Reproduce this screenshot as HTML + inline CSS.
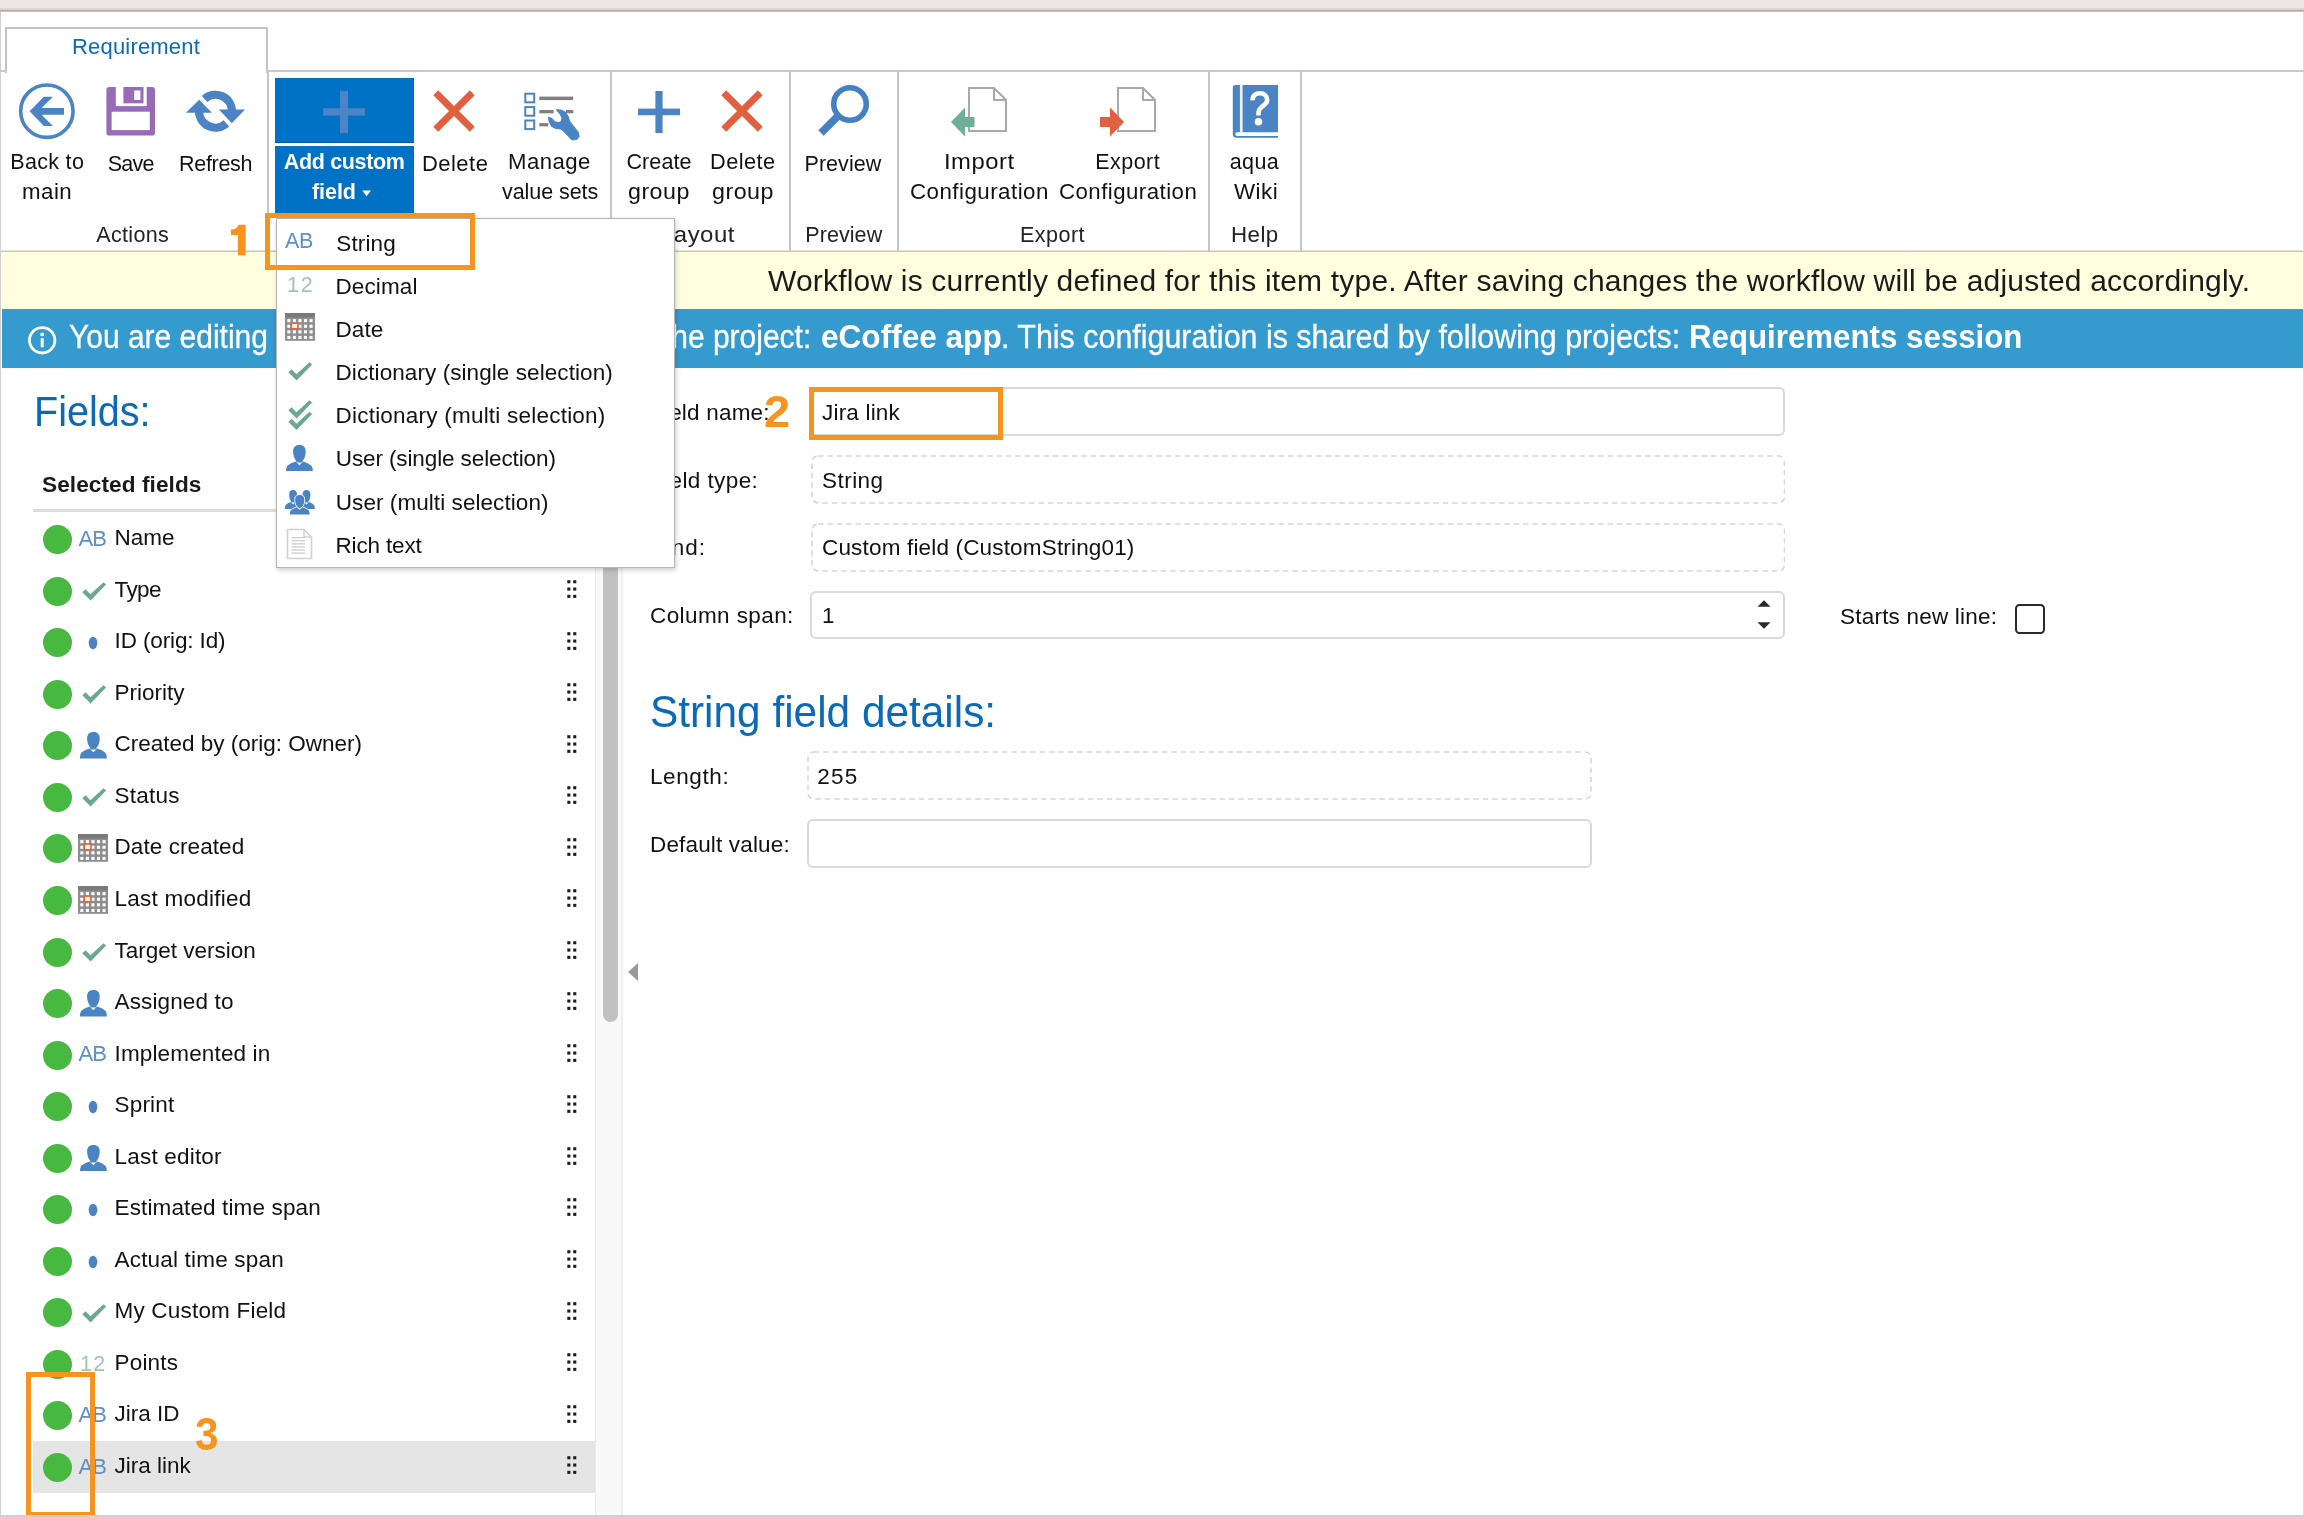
<!DOCTYPE html>
<html>
<head>
<meta charset="utf-8">
<title>Requirement</title>
<style>
*{box-sizing:border-box;margin:0;padding:0}
html,body{width:2304px;height:1517px;overflow:hidden;background:#fff}
body{position:relative;font-family:"Liberation Sans",sans-serif;color:#111;}
#wrap{position:absolute;left:0;top:0;width:2304px;height:1517px;overflow:hidden;will-change:transform;background:#fff}
.abs{position:absolute}
.t{position:absolute;white-space:nowrap;line-height:1}
/* top */
#topband{left:0;top:0;width:2304px;height:10px;background:linear-gradient(#e9e8e7 0 8px,#dad8d7 8px 10px)}
#topline{left:0;top:10px;width:2304px;height:2px;background:linear-gradient(#c49aa4 0 1px,#dcbcc3 1px 2px)}
#leftedge{left:0;top:12px;width:1px;height:1505px;background:#cfcfcf}
#rightedge{left:2303px;top:12px;width:1px;height:1505px;background:#dcdcdc}
#bottomedge{left:0;top:1515px;width:2304px;height:2px;background:#d4d4d4}
/* tab */
#tab{left:5px;top:27px;width:263px;height:46px;border:2px solid #c4c4c4;border-bottom:none;background:#fff}
#ribline{left:267px;top:70px;width:2037px;height:2px;background:#c9c9c9}
#riblineL{left:0;top:70px;width:7px;height:2px;background:#c9c9c9}
#ribbottom{left:0;top:250px;width:2304px;height:2px;background:linear-gradient(#e2e2e2 0 50%,#c4c4c4 50% 100%)}
.vsep{position:absolute;top:71px;width:2px;height:180px;background:#c6c6c6}
.rt{position:absolute;text-align:center;white-space:nowrap;font-size:21.5px;line-height:30px;color:#111;transform-origin:50% 50%}
.grp{position:absolute;text-align:center;white-space:nowrap;font-size:21.5px;line-height:30px;color:#222}
/* banners */
#yellow{left:2px;top:252px;width:2301px;height:57px;background:#ffffe0}
#blue{left:2px;top:309px;width:2301px;height:59px;background:#359bcf;border-top:1px solid #2d9fd4;border-bottom:1px solid #2d9fd4}
/* left list */
.row{position:absolute;left:33px;width:562px;height:52px}
.dot{position:absolute;left:43px;width:29px;height:29px;border-radius:50%;background:#47b840}
.lt{position:absolute;left:114.5px;font-size:22.5px;line-height:26px;white-space:nowrap;color:#111}
.hd{position:absolute;left:565px;width:14px;height:22px}
.ic{position:absolute}
/* form */
.lbl{position:absolute;font-size:22.5px;line-height:26px;white-space:nowrap;color:#111}
.inp{position:absolute;border:2px solid #d9d9d9;border-radius:6px;background:#fff;font-size:22.5px;line-height:26px;color:#111;padding:0 0 0 11px;white-space:nowrap}
.inp.d{border:2px dashed #dcdcdc}
/* menu */
#menu{left:276px;top:218px;width:399px;height:350px;background:#fff;border:1px solid #b4b4b4;box-shadow:1px 2px 5px rgba(0,0,0,.2)}
.mi{position:absolute;left:337px;font-size:22.5px;line-height:30px;white-space:nowrap;color:#111}
.bl{font-size:30px;color:#fff;-webkit-text-stroke:0.35px #fff}
.ob{position:absolute;border:5px solid #f7941d}
.on{position:absolute;color:#f7941d;font-weight:bold;white-space:nowrap;line-height:1}
</style>
</head>
<body>
<div id="wrap">
<!--TOP-->
<div class="abs" id="topband"></div>
<div class="abs" id="topline"></div>
<div class="abs" id="leftedge"></div>
<div class="abs" id="rightedge"></div>
<div class="abs" id="bottomedge"></div>
<!--RIBBON-->
<div class="abs" id="tab"></div>
<div class="abs" id="ribline"></div>
<div class="abs" id="riblineL"></div>
<div class="abs" id="ribbottom"></div>
<div class="t" id="tabtxt" style="left:72.00px;letter-spacing:0.185px;top:34.4px;font-size:22px;line-height:26px;color:#0a6ab8">Requirement</div>
<div class="vsep" style="left:267px"></div>
<div class="vsep" style="left:610px"></div>
<div class="vsep" style="left:789px"></div>
<div class="vsep" style="left:897px"></div>
<div class="vsep" style="left:1208px"></div>
<div class="vsep" style="left:1300px"></div>
<!-- Back -->
<svg class="abs" style="left:17px;top:81px" width="62" height="62" viewBox="0 0 62 62"><circle cx="29.85" cy="30.15" r="26.2" fill="none" stroke="#4a84c4" stroke-width="3.6"/><path d="M12.6 30.3 L26.9 15.7 L35.9 15.7 L24.6 27.1 L47 27.1 L47 33.8 L24.6 33.8 L35.9 44.9 L26.9 44.9 Z" fill="#4a84c4"/></svg>
<!-- Save -->
<svg class="abs" style="left:105px;top:86px" width="52" height="52" viewBox="0 0 52 52"><rect x="1.4" y="1" width="48.6" height="48.6" rx="3.2" fill="#976bb8"/><rect x="10.8" y="0" width="30.9" height="20.1" fill="#fff"/><rect x="18.4" y="1" width="20.1" height="16.3" fill="#976bb8"/><rect x="29.2" y="4.5" width="6.2" height="9.4" fill="#fff"/><rect x="6.6" y="25.7" width="38.2" height="18.4" fill="#fff"/></svg>
<!-- Refresh -->
<svg class="abs" style="left:184px;top:88px" width="62" height="48" viewBox="0 0 62 48"><path d="M47.90 23.70 A16.4 16.4 0 0 0 20.53 11.01" fill="none" stroke="#4a84c4" stroke-width="8.3"/><path d="M42.47 35.39 A16.4 16.4 0 0 1 15.10 22.70" fill="none" stroke="#4a84c4" stroke-width="8.3"/><path d="M34.9 21.6 L61.0 21.6 L47.8 35.2 Z" fill="#4a84c4"/><path d="M1.9 24.7 L27.9 24.7 L15.2 11.7 Z" fill="#4a84c4"/></svg>
<!-- Add custom field -->
<div class="abs" style="left:275px;top:78px;width:139px;height:65px;background:#0072c6;border-bottom:1.5px solid #005aa8"></div>
<div class="abs" style="left:275px;top:146px;width:139px;height:67px;background:#0072c6"></div>
<svg class="abs" style="left:323.3px;top:90.7px" width="42" height="42" viewBox="0 0 42 42"><rect x="17.0" y="0" width="8" height="42" fill="#4b85c6"/><rect x="0" y="17.2" width="42" height="7.4" fill="#4b85c6"/></svg>
<!-- Delete -->
<svg class="abs" style="left:433.3px;top:90.2px" width="42" height="42" viewBox="0 0 42 42"><path d="M5.2 0.3 L21 16 L36.8 0.3 L41.7 5.2 L26 21 L41.7 36.8 L36.8 41.7 L21 26 L5.2 41.7 L0.3 36.8 L16 21 L0.3 5.2 Z" fill="#e06040"/></svg>
<!-- Manage value sets -->
<svg class="abs" style="left:522px;top:90px" width="60" height="52" viewBox="0 0 60 52"><g fill="none" stroke="#4a84c4" stroke-width="2"><rect x="3.3" y="3.7" width="8.9" height="8.6"/><rect x="3.3" y="17.1" width="8.9" height="8.6"/><rect x="3.3" y="30.5" width="8.9" height="8.6"/></g><g fill="#7f7f7f"><rect x="17.3" y="6.6" width="33.9" height="3.5"/><rect x="17.3" y="20" width="14.3" height="3.3"/><rect x="44" y="20" width="7.2" height="3.3"/><rect x="17.3" y="33.1" width="9" height="3.3"/></g><path d="M34.6 19.8 L38.8 20 L43.4 22.3 L46.1 26.5 L47.5 31.5 L49.8 34.3 L56.3 42.6 L57 46.3 L54.5 49.5 L50.3 49.8 L48 47.7 L41.5 40.8 L38.8 38.9 L34.1 38.5 L29.5 36.1 L27.2 31.5 L26.5 27.4 L29.5 28.3 L32.3 31.5 L36.5 32.9 L39.2 31.5 L40.1 28.3 L38.3 24.1 Z" fill="#4a84c4" stroke="#4a84c4" stroke-width="1.2" stroke-linejoin="round"/></svg>
<!-- Create group -->
<svg class="abs" style="left:638.3px;top:90.6px" width="42" height="42" viewBox="0 0 42 42"><rect x="17.4" y="0" width="7.2" height="42" fill="#4a84c4"/><rect x="0" y="17.599999999999998" width="42" height="6.6000000000000005" fill="#4a84c4"/></svg>
<!-- Delete group -->
<svg class="abs" style="left:721px;top:90.2px" width="42" height="42" viewBox="0 0 42 42"><path d="M5.2 0.3 L21 16 L36.8 0.3 L41.7 5.2 L26 21 L41.7 36.8 L36.8 41.7 L21 26 L5.2 41.7 L0.3 36.8 L16 21 L0.3 5.2 Z" fill="#e06040"/></svg>
<!-- Preview -->
<svg class="abs" style="left:815px;top:83px" width="58" height="58" viewBox="0 0 58 58"><circle cx="35" cy="21" r="16.3" fill="none" stroke="#4680c2" stroke-width="5.6"/><path d="M23.5 32.5 L6 50" stroke="#4680c2" stroke-width="7.5" stroke-linecap="butt"/></svg>
<!-- Import -->
<svg class="abs" style="left:950px;top:85px" width="60" height="54" viewBox="0 0 60 54"><path d="M19 3 H44 L56 15 V46 H19 Z" fill="#fff" stroke="#a9a9a9" stroke-width="2"/><path d="M44 3 V15 H56" fill="none" stroke="#a9a9a9" stroke-width="2"/><path d="M1 37 L15 22.5 L15 32 L24.5 32 L24.5 42 L15 42 L15 51.5 Z" fill="#6fae98"/></svg>
<!-- Export -->
<svg class="abs" style="left:1098px;top:85px" width="60" height="54" viewBox="0 0 60 54"><path d="M20 3 H45 L57 15 V46 H20 Z" fill="#fff" stroke="#a9a9a9" stroke-width="2"/><path d="M45 3 V15 H57" fill="none" stroke="#a9a9a9" stroke-width="2"/><path d="M2 32 L12 32 L12 22.5 L26 37 L12 51.5 L12 42 L2 42 Z" fill="#e0603f"/></svg>
<!-- aqua wiki -->
<svg class="abs" style="left:1230px;top:84px" width="50" height="56" viewBox="0 0 50 56"><path d="M6 0.9 H48 V53.8 H6.5 Q2.8 53.8 2.8 50 V4.2 Q2.8 0.9 6 0.9 Z" fill="#4a84c4"/><rect x="9.9" y="0" width="2.7" height="48.4" fill="#eaf3fb"/><path d="M9.9 48.2 H49 V51.9 H7 Q5.2 51.9 5.2 50 Q5.2 48.2 7 48.2 Z" fill="#fff"/><path d="M22.6 16.4 C22.4 11.6 25.8 9.3 29.8 9.3 C34.2 9.3 37.2 12 37.2 16.2 C37.2 21.4 28.5 22.4 28.5 28.4 L28.5 31.4" fill="none" stroke="#fff" stroke-width="4.6"/><circle cx="28.5" cy="37.7" r="3.8" fill="#fff"/></svg>
<!-- group labels -->
<!--RLABELS-->
<div class="t" style="left:10.25px;letter-spacing:0.317px;top:147.2px;font-size:21.5px;line-height:30px;color:#111;">Back to</div>
<div class="t" style="left:21.75px;letter-spacing:0.450px;transform:scaleX(1.0365);transform-origin:0 50%;top:177.0px;font-size:21.5px;line-height:30px;color:#111;">main</div>
<div class="t" style="left:107.75px;letter-spacing:-0.767px;top:149.4px;font-size:21.5px;line-height:30px;color:#111;">Save</div>
<div class="t" style="left:179.00px;letter-spacing:-0.292px;top:149.4px;font-size:21.5px;line-height:30px;color:#111;">Refresh</div>
<div class="t" style="left:283.75px;letter-spacing:-0.339px;top:147.2px;font-size:21.5px;line-height:30px;color:#fff;font-weight:bold;">Add custom</div>
<div class="t" style="left:312.00px;letter-spacing:-0.050px;top:177.0px;font-size:21.5px;line-height:30px;color:#fff;font-weight:bold;">field</div>
<div class="t" style="left:421.75px;letter-spacing:0.450px;transform:scaleX(1.0227);transform-origin:0 50%;top:149.4px;font-size:21.5px;line-height:30px;color:#111;">Delete</div>
<div class="t" style="left:507.75px;letter-spacing:0.450px;transform:scaleX(1.0304);transform-origin:0 50%;top:147.2px;font-size:21.5px;line-height:30px;color:#111;">Manage</div>
<div class="t" style="left:502.00px;letter-spacing:-0.061px;top:177.0px;font-size:21.5px;line-height:30px;color:#111;">value sets</div>
<div class="t" style="left:626.50px;letter-spacing:0.080px;top:147.2px;font-size:21.5px;line-height:30px;color:#111;">Create</div>
<div class="t" style="left:628.25px;letter-spacing:0.450px;transform:scaleX(1.0800);transform-origin:0 50%;top:177.0px;font-size:21.5px;line-height:30px;color:#111;">group</div>
<div class="t" style="left:709.50px;letter-spacing:0.450px;transform:scaleX(1.0121);transform-origin:0 50%;top:147.2px;font-size:21.5px;line-height:30px;color:#111;">Delete</div>
<div class="t" style="left:711.75px;letter-spacing:0.450px;transform:scaleX(1.0806);transform-origin:0 50%;top:177.0px;font-size:21.5px;line-height:30px;color:#111;">group</div>
<div class="t" style="left:804.50px;letter-spacing:0.042px;top:149.4px;font-size:21.5px;line-height:30px;color:#111;">Preview</div>
<div class="t" style="left:943.50px;letter-spacing:0.450px;transform:scaleX(1.1086);transform-origin:0 50%;top:147.2px;font-size:21.5px;line-height:30px;color:#111;">Import</div>
<div class="t" style="left:909.75px;letter-spacing:0.450px;transform:scaleX(1.0382);transform-origin:0 50%;top:177.0px;font-size:21.5px;line-height:30px;color:#111;">Configuration</div>
<div class="t" style="left:1095.25px;letter-spacing:0.450px;top:147.2px;font-size:21.5px;line-height:30px;color:#111;">Export</div>
<div class="t" style="left:1059.00px;letter-spacing:0.450px;transform:scaleX(1.0336);transform-origin:0 50%;top:177.0px;font-size:21.5px;line-height:30px;color:#111;">Configuration</div>
<div class="t" style="left:1229.75px;letter-spacing:0.367px;top:147.2px;font-size:21.5px;line-height:30px;color:#111;">aqua</div>
<div class="t" style="left:1234.00px;letter-spacing:0.450px;transform:scaleX(1.0398);transform-origin:0 50%;top:177.0px;font-size:21.5px;line-height:30px;color:#111;">Wiki</div>
<div class="t" style="left:96.25px;letter-spacing:0.350px;top:220.4px;font-size:21.5px;line-height:30px;color:#222;">Actions</div>
<div class="t" style="left:659.75px;letter-spacing:0.450px;transform:scaleX(1.1138);transform-origin:0 50%;top:220.4px;font-size:21.5px;line-height:30px;color:#222;">Layout</div>
<div class="t" style="left:805.25px;letter-spacing:0.075px;top:220.4px;font-size:21.5px;line-height:30px;color:#222;">Preview</div>
<div class="t" style="left:1020.25px;letter-spacing:0.450px;transform:scaleX(1.0024);transform-origin:0 50%;top:220.4px;font-size:21.5px;line-height:30px;color:#222;">Export</div>
<div class="t" style="left:1231.25px;letter-spacing:0.450px;transform:scaleX(1.0372);transform-origin:0 50%;top:220.4px;font-size:21.5px;line-height:30px;color:#222;">Help</div>

<svg class="abs" style="left:361px;top:189px" width="12" height="9" viewBox="0 0 12 9"><path d="M1.2 1.5 L10 1.5 L5.6 7.2 Z" fill="#fff"/></svg>
<!--BANNERS-->
<div class="abs" id="yellow"></div>
<div class="abs" id="blue"></div>
<svg class="abs" style="left:27px;top:325px" width="30" height="30" viewBox="0 0 30 30"><circle cx="15.2" cy="15.3" r="12.7" fill="none" stroke="#fff" stroke-width="2.8"/><rect x="13.7" y="13.2" width="3" height="9" fill="#fff"/><circle cx="15.2" cy="9.4" r="1.9" fill="#fff"/></svg>
<div class="t" style="left:69.25px;letter-spacing:0.000px;transform:scaleX(0.9283);transform-origin:0 50%;top:320.2px;font-size:32.3px;line-height:34px;color:#fff;font-weight:normal;-webkit-text-stroke:0.3px #fff;">You are editing the Requirement template of the project:</div>
<div class="t" style="left:820.75px;letter-spacing:0.000px;transform:scaleX(0.9775);transform-origin:0 50%;top:320.2px;font-size:32.3px;line-height:34px;color:#fff;font-weight:bold;">eCoffee app</div>
<div class="t" style="left:1001.00px;letter-spacing:0.000px;transform:scaleX(0.9419);transform-origin:0 50%;top:320.2px;font-size:32.3px;line-height:34px;color:#fff;font-weight:normal;-webkit-text-stroke:0.3px #fff;">. This configuration is shared by following projects:</div>
<div class="t" style="left:1689.00px;letter-spacing:0.000px;transform:scaleX(0.9674);transform-origin:0 50%;top:320.2px;font-size:32.3px;line-height:34px;color:#fff;font-weight:bold;">Requirements session</div>
<div class="t" id="wf" style="left:768.00px;letter-spacing:0.186px;top:266px;font-size:30px;color:#1a1a1a">Workflow is currently defined for this item type. After saving changes the workflow will be adjusted accordingly.</div>

<div class="t" id="fieldsT" style="left:33.50px;letter-spacing:0.000px;transform:scaleX(0.9208);transform-origin:0 50%;top:389.6px;font-size:43px;line-height:43px;color:#0a6ab8">Fields:</div>
<div class="t" id="selT" style="left:42.00px;letter-spacing:0.079px;top:472.4px;font-size:22.6px;line-height:26px;font-weight:bold;color:#1a1a1a">Selected fields</div>
<div class="abs" style="left:33px;top:509px;width:562px;height:3px;background:#dcdcdc"></div>
<div class="abs" style="left:595px;top:368px;width:28px;height:1147px;background:#f9f9f9;border-left:1px solid #eaeaea;border-right:2px solid #efefef"></div>
<div class="abs" style="left:602.5px;top:380px;width:15px;height:642px;background:#c1c1c1;border-radius:7.5px"></div>
<svg class="abs" style="left:627px;top:962px" width="12" height="20" viewBox="0 0 12 20"><path d="M1 10 L11 1 L11 19 Z" fill="#9a9a9a"/></svg>
<div class="dot" style="top:525.2px"></div>
<div class="t" style="left:78.6px;top:527.8px;font-size:22px;line-height:22px;color:#5f8ec9;letter-spacing:-1.1px">AB</div>
<div class="lt" style="top:525.2px;letter-spacing:0px">Name</div>
<div class="dot" style="top:576.7px"></div>
<svg class="abs" style="left:82.0px;top:582.0px" width="24.5" height="19" viewBox="0 0 24.5 19"><path d="M0.3 10.2 L3.6 7.2 L8.4 12.2 L21.5 0.3 L24.1 2.6 L8.6 18.6 Z" fill="#6aa893"/></svg>
<div class="lt" style="top:576.7px;letter-spacing:-0.6px">Type</div>
<svg class="abs" style="left:567.2px;top:579.9px" width="10" height="19" viewBox="0 0 10 19"><rect x="0.3" y="0.2" width="3.1" height="3.1" fill="#1c1c1c"/><rect x="0.3" y="7.5" width="3.1" height="3.1" fill="#1c1c1c"/><rect x="0.3" y="14.8" width="3.1" height="3.1" fill="#1c1c1c"/><rect x="6.2" y="0.2" width="3.1" height="3.1" fill="#1c1c1c"/><rect x="6.2" y="7.5" width="3.1" height="3.1" fill="#1c1c1c"/><rect x="6.2" y="14.8" width="3.1" height="3.1" fill="#1c1c1c"/></svg>
<div class="dot" style="top:628.3px"></div>
<svg class="abs" style="left:88.3px;top:636.2px" width="10" height="14" viewBox="0 0 10 14"><ellipse cx="5" cy="7" rx="4.3" ry="6.25" fill="#4a84c4"/></svg>
<div class="lt" style="top:628.3px;letter-spacing:-0.12px">ID (orig: Id)</div>
<svg class="abs" style="left:567.2px;top:631.5px" width="10" height="19" viewBox="0 0 10 19"><rect x="0.3" y="0.2" width="3.1" height="3.1" fill="#1c1c1c"/><rect x="0.3" y="7.5" width="3.1" height="3.1" fill="#1c1c1c"/><rect x="0.3" y="14.8" width="3.1" height="3.1" fill="#1c1c1c"/><rect x="6.2" y="0.2" width="3.1" height="3.1" fill="#1c1c1c"/><rect x="6.2" y="7.5" width="3.1" height="3.1" fill="#1c1c1c"/><rect x="6.2" y="14.8" width="3.1" height="3.1" fill="#1c1c1c"/></svg>
<div class="dot" style="top:679.8px"></div>
<svg class="abs" style="left:82.0px;top:685.1px" width="24.5" height="19" viewBox="0 0 24.5 19"><path d="M0.3 10.2 L3.6 7.2 L8.4 12.2 L21.5 0.3 L24.1 2.6 L8.6 18.6 Z" fill="#6aa893"/></svg>
<div class="lt" style="top:679.8px;letter-spacing:0px">Priority</div>
<svg class="abs" style="left:567.2px;top:683.0px" width="10" height="19" viewBox="0 0 10 19"><rect x="0.3" y="0.2" width="3.1" height="3.1" fill="#1c1c1c"/><rect x="0.3" y="7.5" width="3.1" height="3.1" fill="#1c1c1c"/><rect x="0.3" y="14.8" width="3.1" height="3.1" fill="#1c1c1c"/><rect x="6.2" y="0.2" width="3.1" height="3.1" fill="#1c1c1c"/><rect x="6.2" y="7.5" width="3.1" height="3.1" fill="#1c1c1c"/><rect x="6.2" y="14.8" width="3.1" height="3.1" fill="#1c1c1c"/></svg>
<div class="dot" style="top:731.4px"></div>
<svg class="abs" style="left:79.7px;top:732.3px" width="27.0" height="26.5" viewBox="0 0 27 26.5"><path d="M13.4 0 C17.6 0 19.9 2.6 19.7 6.6 L19.5 9 C19.2 12.4 17.6 14.8 16.5 15.9 L16.5 17.6 L10.3 17.6 L10.3 15.9 C9.2 14.8 7.6 12.4 7.3 9 L7.1 6.6 C6.9 2.6 9.2 0 13.4 0 Z" fill="#4a84c4"/><path d="M9.6 16.6 L13.4 20.2 L17.2 16.6 C20.5 18 25 19.3 26.2 22.2 C26.8 23.6 26.8 25 26.8 26.5 L0 26.5 C0 25 0 23.6 0.6 22.2 C1.8 19.3 6.3 18 9.6 16.6 Z" fill="#4a84c4"/></svg>
<div class="lt" style="top:731.4px;letter-spacing:0px">Created by (orig: Owner)</div>
<svg class="abs" style="left:567.2px;top:734.6px" width="10" height="19" viewBox="0 0 10 19"><rect x="0.3" y="0.2" width="3.1" height="3.1" fill="#1c1c1c"/><rect x="0.3" y="7.5" width="3.1" height="3.1" fill="#1c1c1c"/><rect x="0.3" y="14.8" width="3.1" height="3.1" fill="#1c1c1c"/><rect x="6.2" y="0.2" width="3.1" height="3.1" fill="#1c1c1c"/><rect x="6.2" y="7.5" width="3.1" height="3.1" fill="#1c1c1c"/><rect x="6.2" y="14.8" width="3.1" height="3.1" fill="#1c1c1c"/></svg>
<div class="dot" style="top:782.9px"></div>
<svg class="abs" style="left:82.0px;top:788.2px" width="24.5" height="19" viewBox="0 0 24.5 19"><path d="M0.3 10.2 L3.6 7.2 L8.4 12.2 L21.5 0.3 L24.1 2.6 L8.6 18.6 Z" fill="#6aa893"/></svg>
<div class="lt" style="top:782.9px;letter-spacing:0.26px">Status</div>
<svg class="abs" style="left:567.2px;top:786.1px" width="10" height="19" viewBox="0 0 10 19"><rect x="0.3" y="0.2" width="3.1" height="3.1" fill="#1c1c1c"/><rect x="0.3" y="7.5" width="3.1" height="3.1" fill="#1c1c1c"/><rect x="0.3" y="14.8" width="3.1" height="3.1" fill="#1c1c1c"/><rect x="6.2" y="0.2" width="3.1" height="3.1" fill="#1c1c1c"/><rect x="6.2" y="7.5" width="3.1" height="3.1" fill="#1c1c1c"/><rect x="6.2" y="14.8" width="3.1" height="3.1" fill="#1c1c1c"/></svg>
<div class="dot" style="top:834.4px"></div>
<svg class="abs" style="left:78.2px;top:834.2px" width="30" height="28" viewBox="0 0 30 28"><rect x="0" y="0" width="30" height="27.8" fill="#8e8e8e"/><rect x="0" y="0" width="30" height="4.4" fill="#7a7a7a"/><rect x="2.30" y="6.10" width="3.1" height="3.1" fill="#fff"/><rect x="2.30" y="11.70" width="3.1" height="3.1" fill="#fff"/><rect x="2.30" y="17.30" width="3.1" height="3.1" fill="#fff"/><rect x="2.30" y="22.90" width="3.1" height="3.1" fill="#fff"/><rect x="7.85" y="6.10" width="3.1" height="3.1" fill="#fff"/><rect x="7.85" y="17.30" width="3.1" height="3.1" fill="#fff"/><rect x="7.85" y="22.90" width="3.1" height="3.1" fill="#fff"/><rect x="13.40" y="6.10" width="3.1" height="3.1" fill="#fff"/><rect x="13.40" y="11.70" width="3.1" height="3.1" fill="#fff"/><rect x="13.40" y="17.30" width="3.1" height="3.1" fill="#fff"/><rect x="13.40" y="22.90" width="3.1" height="3.1" fill="#fff"/><rect x="18.95" y="6.10" width="3.1" height="3.1" fill="#fff"/><rect x="18.95" y="11.70" width="3.1" height="3.1" fill="#fff"/><rect x="18.95" y="17.30" width="3.1" height="3.1" fill="#fff"/><rect x="18.95" y="22.90" width="3.1" height="3.1" fill="#fff"/><rect x="24.50" y="6.10" width="3.1" height="3.1" fill="#fff"/><rect x="24.50" y="11.70" width="3.1" height="3.1" fill="#fff"/><rect x="24.50" y="17.30" width="3.1" height="3.1" fill="#fff"/><rect x="24.50" y="22.90" width="3.1" height="3.1" fill="#fff"/><rect x="6.3" y="10.1" width="6.6" height="5.7" fill="#fdf3e3" stroke="#e0603f" stroke-width="1.5"/></svg>
<div class="lt" style="top:834.4px;letter-spacing:0.08px">Date created</div>
<svg class="abs" style="left:567.2px;top:837.6px" width="10" height="19" viewBox="0 0 10 19"><rect x="0.3" y="0.2" width="3.1" height="3.1" fill="#1c1c1c"/><rect x="0.3" y="7.5" width="3.1" height="3.1" fill="#1c1c1c"/><rect x="0.3" y="14.8" width="3.1" height="3.1" fill="#1c1c1c"/><rect x="6.2" y="0.2" width="3.1" height="3.1" fill="#1c1c1c"/><rect x="6.2" y="7.5" width="3.1" height="3.1" fill="#1c1c1c"/><rect x="6.2" y="14.8" width="3.1" height="3.1" fill="#1c1c1c"/></svg>
<div class="dot" style="top:886.0px"></div>
<svg class="abs" style="left:78.2px;top:885.8px" width="30" height="28" viewBox="0 0 30 28"><rect x="0" y="0" width="30" height="27.8" fill="#8e8e8e"/><rect x="0" y="0" width="30" height="4.4" fill="#7a7a7a"/><rect x="2.30" y="6.10" width="3.1" height="3.1" fill="#fff"/><rect x="2.30" y="11.70" width="3.1" height="3.1" fill="#fff"/><rect x="2.30" y="17.30" width="3.1" height="3.1" fill="#fff"/><rect x="2.30" y="22.90" width="3.1" height="3.1" fill="#fff"/><rect x="7.85" y="6.10" width="3.1" height="3.1" fill="#fff"/><rect x="7.85" y="17.30" width="3.1" height="3.1" fill="#fff"/><rect x="7.85" y="22.90" width="3.1" height="3.1" fill="#fff"/><rect x="13.40" y="6.10" width="3.1" height="3.1" fill="#fff"/><rect x="13.40" y="11.70" width="3.1" height="3.1" fill="#fff"/><rect x="13.40" y="17.30" width="3.1" height="3.1" fill="#fff"/><rect x="13.40" y="22.90" width="3.1" height="3.1" fill="#fff"/><rect x="18.95" y="6.10" width="3.1" height="3.1" fill="#fff"/><rect x="18.95" y="11.70" width="3.1" height="3.1" fill="#fff"/><rect x="18.95" y="17.30" width="3.1" height="3.1" fill="#fff"/><rect x="18.95" y="22.90" width="3.1" height="3.1" fill="#fff"/><rect x="24.50" y="6.10" width="3.1" height="3.1" fill="#fff"/><rect x="24.50" y="11.70" width="3.1" height="3.1" fill="#fff"/><rect x="24.50" y="17.30" width="3.1" height="3.1" fill="#fff"/><rect x="24.50" y="22.90" width="3.1" height="3.1" fill="#fff"/><rect x="6.3" y="10.1" width="6.6" height="5.7" fill="#fdf3e3" stroke="#e0603f" stroke-width="1.5"/></svg>
<div class="lt" style="top:886.0px;letter-spacing:0.25px">Last modified</div>
<svg class="abs" style="left:567.2px;top:889.2px" width="10" height="19" viewBox="0 0 10 19"><rect x="0.3" y="0.2" width="3.1" height="3.1" fill="#1c1c1c"/><rect x="0.3" y="7.5" width="3.1" height="3.1" fill="#1c1c1c"/><rect x="0.3" y="14.8" width="3.1" height="3.1" fill="#1c1c1c"/><rect x="6.2" y="0.2" width="3.1" height="3.1" fill="#1c1c1c"/><rect x="6.2" y="7.5" width="3.1" height="3.1" fill="#1c1c1c"/><rect x="6.2" y="14.8" width="3.1" height="3.1" fill="#1c1c1c"/></svg>
<div class="dot" style="top:937.5px"></div>
<svg class="abs" style="left:82.0px;top:942.8px" width="24.5" height="19" viewBox="0 0 24.5 19"><path d="M0.3 10.2 L3.6 7.2 L8.4 12.2 L21.5 0.3 L24.1 2.6 L8.6 18.6 Z" fill="#6aa893"/></svg>
<div class="lt" style="top:937.5px;letter-spacing:0px">Target version</div>
<svg class="abs" style="left:567.2px;top:940.7px" width="10" height="19" viewBox="0 0 10 19"><rect x="0.3" y="0.2" width="3.1" height="3.1" fill="#1c1c1c"/><rect x="0.3" y="7.5" width="3.1" height="3.1" fill="#1c1c1c"/><rect x="0.3" y="14.8" width="3.1" height="3.1" fill="#1c1c1c"/><rect x="6.2" y="0.2" width="3.1" height="3.1" fill="#1c1c1c"/><rect x="6.2" y="7.5" width="3.1" height="3.1" fill="#1c1c1c"/><rect x="6.2" y="14.8" width="3.1" height="3.1" fill="#1c1c1c"/></svg>
<div class="dot" style="top:989.1px"></div>
<svg class="abs" style="left:79.7px;top:990.0px" width="27.0" height="26.5" viewBox="0 0 27 26.5"><path d="M13.4 0 C17.6 0 19.9 2.6 19.7 6.6 L19.5 9 C19.2 12.4 17.6 14.8 16.5 15.9 L16.5 17.6 L10.3 17.6 L10.3 15.9 C9.2 14.8 7.6 12.4 7.3 9 L7.1 6.6 C6.9 2.6 9.2 0 13.4 0 Z" fill="#4a84c4"/><path d="M9.6 16.6 L13.4 20.2 L17.2 16.6 C20.5 18 25 19.3 26.2 22.2 C26.8 23.6 26.8 25 26.8 26.5 L0 26.5 C0 25 0 23.6 0.6 22.2 C1.8 19.3 6.3 18 9.6 16.6 Z" fill="#4a84c4"/></svg>
<div class="lt" style="top:989.1px;letter-spacing:0.14px">Assigned to</div>
<svg class="abs" style="left:567.2px;top:992.3px" width="10" height="19" viewBox="0 0 10 19"><rect x="0.3" y="0.2" width="3.1" height="3.1" fill="#1c1c1c"/><rect x="0.3" y="7.5" width="3.1" height="3.1" fill="#1c1c1c"/><rect x="0.3" y="14.8" width="3.1" height="3.1" fill="#1c1c1c"/><rect x="6.2" y="0.2" width="3.1" height="3.1" fill="#1c1c1c"/><rect x="6.2" y="7.5" width="3.1" height="3.1" fill="#1c1c1c"/><rect x="6.2" y="14.8" width="3.1" height="3.1" fill="#1c1c1c"/></svg>
<div class="dot" style="top:1040.6px"></div>
<div class="t" style="left:78.6px;top:1043.2px;font-size:22px;line-height:22px;color:#5f8ec9;letter-spacing:-1.1px">AB</div>
<div class="lt" style="top:1040.6px;letter-spacing:0.15px">Implemented in</div>
<svg class="abs" style="left:567.2px;top:1043.8px" width="10" height="19" viewBox="0 0 10 19"><rect x="0.3" y="0.2" width="3.1" height="3.1" fill="#1c1c1c"/><rect x="0.3" y="7.5" width="3.1" height="3.1" fill="#1c1c1c"/><rect x="0.3" y="14.8" width="3.1" height="3.1" fill="#1c1c1c"/><rect x="6.2" y="0.2" width="3.1" height="3.1" fill="#1c1c1c"/><rect x="6.2" y="7.5" width="3.1" height="3.1" fill="#1c1c1c"/><rect x="6.2" y="14.8" width="3.1" height="3.1" fill="#1c1c1c"/></svg>
<div class="dot" style="top:1092.1px"></div>
<svg class="abs" style="left:88.3px;top:1100.0px" width="10" height="14" viewBox="0 0 10 14"><ellipse cx="5" cy="7" rx="4.3" ry="6.25" fill="#4a84c4"/></svg>
<div class="lt" style="top:1092.1px;letter-spacing:0.2px">Sprint</div>
<svg class="abs" style="left:567.2px;top:1095.3px" width="10" height="19" viewBox="0 0 10 19"><rect x="0.3" y="0.2" width="3.1" height="3.1" fill="#1c1c1c"/><rect x="0.3" y="7.5" width="3.1" height="3.1" fill="#1c1c1c"/><rect x="0.3" y="14.8" width="3.1" height="3.1" fill="#1c1c1c"/><rect x="6.2" y="0.2" width="3.1" height="3.1" fill="#1c1c1c"/><rect x="6.2" y="7.5" width="3.1" height="3.1" fill="#1c1c1c"/><rect x="6.2" y="14.8" width="3.1" height="3.1" fill="#1c1c1c"/></svg>
<div class="dot" style="top:1143.7px"></div>
<svg class="abs" style="left:79.7px;top:1144.6px" width="27.0" height="26.5" viewBox="0 0 27 26.5"><path d="M13.4 0 C17.6 0 19.9 2.6 19.7 6.6 L19.5 9 C19.2 12.4 17.6 14.8 16.5 15.9 L16.5 17.6 L10.3 17.6 L10.3 15.9 C9.2 14.8 7.6 12.4 7.3 9 L7.1 6.6 C6.9 2.6 9.2 0 13.4 0 Z" fill="#4a84c4"/><path d="M9.6 16.6 L13.4 20.2 L17.2 16.6 C20.5 18 25 19.3 26.2 22.2 C26.8 23.6 26.8 25 26.8 26.5 L0 26.5 C0 25 0 23.6 0.6 22.2 C1.8 19.3 6.3 18 9.6 16.6 Z" fill="#4a84c4"/></svg>
<div class="lt" style="top:1143.7px;letter-spacing:0.2px">Last editor</div>
<svg class="abs" style="left:567.2px;top:1146.9px" width="10" height="19" viewBox="0 0 10 19"><rect x="0.3" y="0.2" width="3.1" height="3.1" fill="#1c1c1c"/><rect x="0.3" y="7.5" width="3.1" height="3.1" fill="#1c1c1c"/><rect x="0.3" y="14.8" width="3.1" height="3.1" fill="#1c1c1c"/><rect x="6.2" y="0.2" width="3.1" height="3.1" fill="#1c1c1c"/><rect x="6.2" y="7.5" width="3.1" height="3.1" fill="#1c1c1c"/><rect x="6.2" y="14.8" width="3.1" height="3.1" fill="#1c1c1c"/></svg>
<div class="dot" style="top:1195.2px"></div>
<svg class="abs" style="left:88.3px;top:1203.1px" width="10" height="14" viewBox="0 0 10 14"><ellipse cx="5" cy="7" rx="4.3" ry="6.25" fill="#4a84c4"/></svg>
<div class="lt" style="top:1195.2px;letter-spacing:0.13px">Estimated time span</div>
<svg class="abs" style="left:567.2px;top:1198.4px" width="10" height="19" viewBox="0 0 10 19"><rect x="0.3" y="0.2" width="3.1" height="3.1" fill="#1c1c1c"/><rect x="0.3" y="7.5" width="3.1" height="3.1" fill="#1c1c1c"/><rect x="0.3" y="14.8" width="3.1" height="3.1" fill="#1c1c1c"/><rect x="6.2" y="0.2" width="3.1" height="3.1" fill="#1c1c1c"/><rect x="6.2" y="7.5" width="3.1" height="3.1" fill="#1c1c1c"/><rect x="6.2" y="14.8" width="3.1" height="3.1" fill="#1c1c1c"/></svg>
<div class="dot" style="top:1246.8px"></div>
<svg class="abs" style="left:88.3px;top:1254.7px" width="10" height="14" viewBox="0 0 10 14"><ellipse cx="5" cy="7" rx="4.3" ry="6.25" fill="#4a84c4"/></svg>
<div class="lt" style="top:1246.8px;letter-spacing:0.19px">Actual time span</div>
<svg class="abs" style="left:567.2px;top:1250.0px" width="10" height="19" viewBox="0 0 10 19"><rect x="0.3" y="0.2" width="3.1" height="3.1" fill="#1c1c1c"/><rect x="0.3" y="7.5" width="3.1" height="3.1" fill="#1c1c1c"/><rect x="0.3" y="14.8" width="3.1" height="3.1" fill="#1c1c1c"/><rect x="6.2" y="0.2" width="3.1" height="3.1" fill="#1c1c1c"/><rect x="6.2" y="7.5" width="3.1" height="3.1" fill="#1c1c1c"/><rect x="6.2" y="14.8" width="3.1" height="3.1" fill="#1c1c1c"/></svg>
<div class="dot" style="top:1298.3px"></div>
<svg class="abs" style="left:82.0px;top:1303.6px" width="24.5" height="19" viewBox="0 0 24.5 19"><path d="M0.3 10.2 L3.6 7.2 L8.4 12.2 L21.5 0.3 L24.1 2.6 L8.6 18.6 Z" fill="#6aa893"/></svg>
<div class="lt" style="top:1298.3px;letter-spacing:0.2px">My Custom Field</div>
<svg class="abs" style="left:567.2px;top:1301.5px" width="10" height="19" viewBox="0 0 10 19"><rect x="0.3" y="0.2" width="3.1" height="3.1" fill="#1c1c1c"/><rect x="0.3" y="7.5" width="3.1" height="3.1" fill="#1c1c1c"/><rect x="0.3" y="14.8" width="3.1" height="3.1" fill="#1c1c1c"/><rect x="6.2" y="0.2" width="3.1" height="3.1" fill="#1c1c1c"/><rect x="6.2" y="7.5" width="3.1" height="3.1" fill="#1c1c1c"/><rect x="6.2" y="14.8" width="3.1" height="3.1" fill="#1c1c1c"/></svg>
<div class="dot" style="top:1349.8px"></div>
<div class="t" style="left:80px;top:1353.6px;font-size:21.5px;line-height:21.5px;color:#9fc4b4;letter-spacing:1.2px">12</div>
<div class="lt" style="top:1349.8px;letter-spacing:0.2px">Points</div>
<svg class="abs" style="left:567.2px;top:1353.0px" width="10" height="19" viewBox="0 0 10 19"><rect x="0.3" y="0.2" width="3.1" height="3.1" fill="#1c1c1c"/><rect x="0.3" y="7.5" width="3.1" height="3.1" fill="#1c1c1c"/><rect x="0.3" y="14.8" width="3.1" height="3.1" fill="#1c1c1c"/><rect x="6.2" y="0.2" width="3.1" height="3.1" fill="#1c1c1c"/><rect x="6.2" y="7.5" width="3.1" height="3.1" fill="#1c1c1c"/><rect x="6.2" y="14.8" width="3.1" height="3.1" fill="#1c1c1c"/></svg>
<div class="dot" style="top:1401.4px"></div>
<div class="t" style="left:78.6px;top:1404.0px;font-size:22px;line-height:22px;color:#5f8ec9;letter-spacing:-1.1px">AB</div>
<div class="lt" style="top:1401.4px;letter-spacing:0px">Jira ID</div>
<svg class="abs" style="left:567.2px;top:1404.6px" width="10" height="19" viewBox="0 0 10 19"><rect x="0.3" y="0.2" width="3.1" height="3.1" fill="#1c1c1c"/><rect x="0.3" y="7.5" width="3.1" height="3.1" fill="#1c1c1c"/><rect x="0.3" y="14.8" width="3.1" height="3.1" fill="#1c1c1c"/><rect x="6.2" y="0.2" width="3.1" height="3.1" fill="#1c1c1c"/><rect x="6.2" y="7.5" width="3.1" height="3.1" fill="#1c1c1c"/><rect x="6.2" y="14.8" width="3.1" height="3.1" fill="#1c1c1c"/></svg>
<div class="abs" style="left:33px;top:1441px;width:562px;height:52px;background:#e5e5e5"></div>
<div class="dot" style="top:1452.9px"></div>
<div class="t" style="left:78.6px;top:1455.5px;font-size:22px;line-height:22px;color:#5f8ec9;letter-spacing:-1.1px">AB</div>
<div class="lt" style="top:1452.9px;letter-spacing:0px">Jira link</div>
<svg class="abs" style="left:567.2px;top:1456.1px" width="10" height="19" viewBox="0 0 10 19"><rect x="0.3" y="0.2" width="3.1" height="3.1" fill="#1c1c1c"/><rect x="0.3" y="7.5" width="3.1" height="3.1" fill="#1c1c1c"/><rect x="0.3" y="14.8" width="3.1" height="3.1" fill="#1c1c1c"/><rect x="6.2" y="0.2" width="3.1" height="3.1" fill="#1c1c1c"/><rect x="6.2" y="7.5" width="3.1" height="3.1" fill="#1c1c1c"/><rect x="6.2" y="14.8" width="3.1" height="3.1" fill="#1c1c1c"/></svg>
<!--LEFT-->
<!--FORM-->
<div class="inp" style="left:810px;top:387px;width:975px;height:49px"></div>
<svg class="abs" style="left:810.5px;top:455px" width="974.5" height="49" viewBox="0 0 974.5 49"><rect x="1" y="1" width="972.5" height="47" rx="6" ry="6" fill="#fff" stroke="#d6d6d6" stroke-width="1.6" stroke-dasharray="5.4 4"/></svg>
<svg class="abs" style="left:810.5px;top:522.5px" width="974.5" height="49" viewBox="0 0 974.5 49"><rect x="1" y="1" width="972.5" height="47" rx="6" ry="6" fill="#fff" stroke="#d6d6d6" stroke-width="1.6" stroke-dasharray="5.4 4"/></svg>
<div class="inp" style="left:810px;top:590.5px;width:975px;height:48.5px"></div>
<svg class="abs" style="left:807px;top:751px" width="785" height="49" viewBox="0 0 785 49"><rect x="1" y="1" width="783" height="47" rx="6" ry="6" fill="#fff" stroke="#d6d6d6" stroke-width="1.6" stroke-dasharray="5.4 4"/></svg>
<div class="inp" style="left:807px;top:819px;width:785px;height:48.5px"></div>
<div class="lbl" style="left:650px;top:399.8px;letter-spacing:0.2px">Field name:</div>
<div class="lbl" style="left:650px;top:467.5px;letter-spacing:0.4px">Field type:</div>
<div class="lbl" style="left:650px;top:535.2px;letter-spacing:0.9px">Kind:</div>
<div class="lbl" style="left:650px;top:603.1px;letter-spacing:0.41px">Column span:</div>
<div class="lbl" style="left:1840.1px;top:604.4px;letter-spacing:0.2px">Starts new line:</div>
<div class="lbl" style="left:650px;top:763.9px;letter-spacing:0.6px">Length:</div>
<div class="lbl" style="left:650px;top:831.6px;letter-spacing:0.16px">Default value:</div>
<div class="lbl" style="left:822px;top:399.8px;letter-spacing:0.19px">Jira link</div>
<div class="lbl" style="left:822px;top:467.5px;letter-spacing:0.46px">String</div>
<div class="lbl" style="left:822px;top:535.2px;letter-spacing:0.17px">Custom field (CustomString01)</div>
<div class="lbl" style="left:822px;top:603.1px;">1</div>
<div class="lbl" style="left:817.3px;top:763.9px;letter-spacing:1.2px">255</div>
<svg class="abs" style="left:1756px;top:598px" width="16" height="34" viewBox="0 0 16 34"><path d="M1.5 8.8 L8 2.2 L14.5 8.8 Z" fill="#2a2a2a"/><path d="M1.5 24.2 L8 30.8 L14.5 24.2 Z" fill="#2a2a2a"/></svg>
<div class="abs" style="left:2014.5px;top:603.5px;width:30px;height:30px;border:2px solid #2a2a2a;border-radius:4.5px;background:#fff"></div>
<div class="t" id="sfd" style="left:649.75px;letter-spacing:0.000px;transform:scaleX(0.9737);transform-origin:0 50%;top:690.4px;font-size:43.5px;line-height:44px;color:#0a6ab8">String field details:</div>
<!--MENU-->
<div class="abs" id="menu"></div>
<div class="t" style="left:336.25px;letter-spacing:0.140px;top:228.6px;font-size:22.5px;line-height:30px;color:#111">String</div>
<div class="t" style="left:335.50px;letter-spacing:0.108px;top:271.8px;font-size:22.5px;line-height:30px;color:#111">Decimal</div>
<div class="t" style="left:335.50px;letter-spacing:0.083px;top:314.9px;font-size:22.5px;line-height:30px;color:#111">Date</div>
<div class="t" style="left:335.50px;letter-spacing:0.077px;top:358.1px;font-size:22.5px;line-height:30px;color:#111">Dictionary (single selection)</div>
<div class="t" style="left:335.50px;letter-spacing:0.222px;top:401.2px;font-size:22.5px;line-height:30px;color:#111">Dictionary (multi selection)</div>
<div class="t" style="left:335.75px;letter-spacing:-0.111px;top:444.4px;font-size:22.5px;line-height:30px;color:#111">User (single selection)</div>
<div class="t" style="left:335.75px;letter-spacing:0.067px;top:487.6px;font-size:22.5px;line-height:30px;color:#111">User (multi selection)</div>
<div class="t" style="left:335.50px;letter-spacing:-0.162px;top:530.7px;font-size:22.5px;line-height:30px;color:#111">Rich text</div>

<div class="t" style="left:285px;top:231px;font-size:21.5px;color:#5f8ec9;letter-spacing:-0.3px">AB</div>
<div class="t" style="left:287px;top:274.5px;font-size:21.5px;color:#9fc4b4;letter-spacing:1.8px">12</div>
<svg class="abs" style="left:284.5px;top:313.3px" width="30" height="28" viewBox="0 0 30 28"><rect x="0" y="0" width="30" height="27.8" fill="#8e8e8e"/><rect x="0" y="0" width="30" height="4.4" fill="#7a7a7a"/><rect x="2.30" y="6.10" width="3.1" height="3.1" fill="#fff"/><rect x="2.30" y="11.70" width="3.1" height="3.1" fill="#fff"/><rect x="2.30" y="17.30" width="3.1" height="3.1" fill="#fff"/><rect x="2.30" y="22.90" width="3.1" height="3.1" fill="#fff"/><rect x="7.85" y="6.10" width="3.1" height="3.1" fill="#fff"/><rect x="7.85" y="17.30" width="3.1" height="3.1" fill="#fff"/><rect x="7.85" y="22.90" width="3.1" height="3.1" fill="#fff"/><rect x="13.40" y="6.10" width="3.1" height="3.1" fill="#fff"/><rect x="13.40" y="11.70" width="3.1" height="3.1" fill="#fff"/><rect x="13.40" y="17.30" width="3.1" height="3.1" fill="#fff"/><rect x="13.40" y="22.90" width="3.1" height="3.1" fill="#fff"/><rect x="18.95" y="6.10" width="3.1" height="3.1" fill="#fff"/><rect x="18.95" y="11.70" width="3.1" height="3.1" fill="#fff"/><rect x="18.95" y="17.30" width="3.1" height="3.1" fill="#fff"/><rect x="18.95" y="22.90" width="3.1" height="3.1" fill="#fff"/><rect x="24.50" y="6.10" width="3.1" height="3.1" fill="#fff"/><rect x="24.50" y="11.70" width="3.1" height="3.1" fill="#fff"/><rect x="24.50" y="17.30" width="3.1" height="3.1" fill="#fff"/><rect x="24.50" y="22.90" width="3.1" height="3.1" fill="#fff"/><rect x="6.3" y="10.1" width="6.6" height="5.7" fill="#fdf3e3" stroke="#e0603f" stroke-width="1.5"/></svg>
<svg class="abs" style="left:288.0px;top:362.3px" width="24.5" height="19" viewBox="0 0 24.5 19"><path d="M0.3 10.2 L3.6 7.2 L8.4 12.2 L21.5 0.3 L24.1 2.6 L8.6 18.6 Z" fill="#6aa893"/></svg>
<svg class="abs" style="left:288.0px;top:399.6px" width="24.5" height="31" viewBox="0 0 24.5 31"><path d="M0.3 10.2 L3.6 7.2 L8.4 12.2 L21.5 0.3 L24.1 2.6 L8.6 18.6 Z" fill="#6aa893"/><path d="M0.3 10.2 L3.6 7.2 L8.4 12.2 L21.5 0.3 L24.1 2.6 L8.6 18.6 Z" fill="#6aa893" transform="translate(0,11.5)"/></svg>
<svg class="abs" style="left:285.6px;top:444.6px" width="27.0" height="26.5" viewBox="0 0 27 26.5"><path d="M13.4 0 C17.6 0 19.9 2.6 19.7 6.6 L19.5 9 C19.2 12.4 17.6 14.8 16.5 15.9 L16.5 17.6 L10.3 17.6 L10.3 15.9 C9.2 14.8 7.6 12.4 7.3 9 L7.1 6.6 C6.9 2.6 9.2 0 13.4 0 Z" fill="#4a84c4"/><path d="M9.6 16.6 L13.4 20.2 L17.2 16.6 C20.5 18 25 19.3 26.2 22.2 C26.8 23.6 26.8 25 26.8 26.5 L0 26.5 C0 25 0 23.6 0.6 22.2 C1.8 19.3 6.3 18 9.6 16.6 Z" fill="#4a84c4"/></svg>
<svg class="abs" style="left:283.7px;top:488.5px" width="32" height="27" viewBox="0 0 32 27"><g transform="translate(0.8,1.1) scale(0.62,0.71)"><path d="M13.4 0 C17.6 0 19.9 2.6 19.7 6.6 L19.5 9 C19.2 12.4 17.6 14.8 16.5 15.9 L16.5 17.6 L10.3 17.6 L10.3 15.9 C9.2 14.8 7.6 12.4 7.3 9 L7.1 6.6 C6.9 2.6 9.2 0 13.4 0 Z" fill="#4a84c4"/><path d="M9.6 16.6 L13.4 20.2 L17.2 16.6 C20.5 18 25 19.3 26.2 22.2 C26.8 23.6 26.8 25 26.8 26.5 L0 26.5 C0 25 0 23.6 0.6 22.2 C1.8 19.3 6.3 18 9.6 16.6 Z" fill="#4a84c4"/></g><g transform="translate(14.2,1.1) scale(0.62,0.71)"><path d="M13.4 0 C17.6 0 19.9 2.6 19.7 6.6 L19.5 9 C19.2 12.4 17.6 14.8 16.5 15.9 L16.5 17.6 L10.3 17.6 L10.3 15.9 C9.2 14.8 7.6 12.4 7.3 9 L7.1 6.6 C6.9 2.6 9.2 0 13.4 0 Z" fill="#4a84c4"/><path d="M9.6 16.6 L13.4 20.2 L17.2 16.6 C20.5 18 25 19.3 26.2 22.2 C26.8 23.6 26.8 25 26.8 26.5 L0 26.5 C0 25 0 23.6 0.6 22.2 C1.8 19.3 6.3 18 9.6 16.6 Z" fill="#4a84c4"/></g><g transform="translate(5.95,6.1) scale(0.73,0.73)"><path d="M13.4 0 C17.6 0 19.9 2.6 19.7 6.6 L19.5 9 C19.2 12.4 17.6 14.8 16.5 15.9 L16.5 17.6 L10.3 17.6 L10.3 15.9 C9.2 14.8 7.6 12.4 7.3 9 L7.1 6.6 C6.9 2.6 9.2 0 13.4 0 Z" fill="#4a84c4" stroke="#fff" stroke-width="2.2" paint-order="stroke"/><path d="M9.6 16.6 L13.4 20.2 L17.2 16.6 C20.5 18 25 19.3 26.2 22.2 C26.8 23.6 26.8 25 26.8 26.5 L0 26.5 C0 25 0 23.6 0.6 22.2 C1.8 19.3 6.3 18 9.6 16.6 Z" fill="#4a84c4" stroke="#fff" stroke-width="2.2" paint-order="stroke"/></g></svg>
<svg class="abs" style="left:285.6px;top:527.7px" width="28" height="32" viewBox="0 0 28 32"><path d="M1.5 1.5 H18 L25.5 9 V30.5 H1.5 Z" fill="#fff" stroke="#d2d2d2" stroke-width="1.6"/><path d="M18 1.5 V9 H25.5" fill="none" stroke="#d2d2d2" stroke-width="1.4"/><rect x="5.5" y="9.0" width="13.5" height="1.3" fill="#cdcdcd"/><rect x="5.5" y="12.1" width="13.5" height="1.3" fill="#cdcdcd"/><rect x="5.5" y="15.2" width="13.5" height="1.3" fill="#cdcdcd"/><rect x="5.5" y="18.3" width="13.5" height="1.3" fill="#cdcdcd"/><rect x="5.5" y="21.4" width="13.5" height="1.3" fill="#cdcdcd"/><rect x="5.5" y="24.5" width="13.5" height="1.3" fill="#cdcdcd"/></svg>
<!--ORANGE-->
<div class="ob" style="left:265px;top:213px;width:210px;height:57px"></div>
<svg class="abs" style="left:229px;top:223px" width="20" height="34" viewBox="0 0 20 34"><path d="M9.6 1.7 H16.7 V32.3 H8.8 V12 H1.9 V6.6 C6 6.4 8.6 4.9 9.6 1.7 Z" fill="#f7941d"/></svg>
<div class="ob" style="left:808.5px;top:386.5px;width:194px;height:53.5px"></div>
<div class="on" id="n2" style="left:763.9px;top:390.6px;font-size:43.5px;line-height:43.5px;transform:scaleX(1.08);transform-origin:0 50%">2</div>
<div class="ob" style="left:26px;top:1372px;width:69px;height:144px;border-bottom-width:4px"></div>
<div class="on" id="n3" style="left:194.8px;top:1409.5px;font-size:47px;line-height:47px;transform:scaleX(0.9);transform-origin:0 50%">3</div>
<div class="abs" style="left:0;top:1515px;width:2304px;height:2px;background:#cfcfcf"></div>
</div>
</body>
</html>
